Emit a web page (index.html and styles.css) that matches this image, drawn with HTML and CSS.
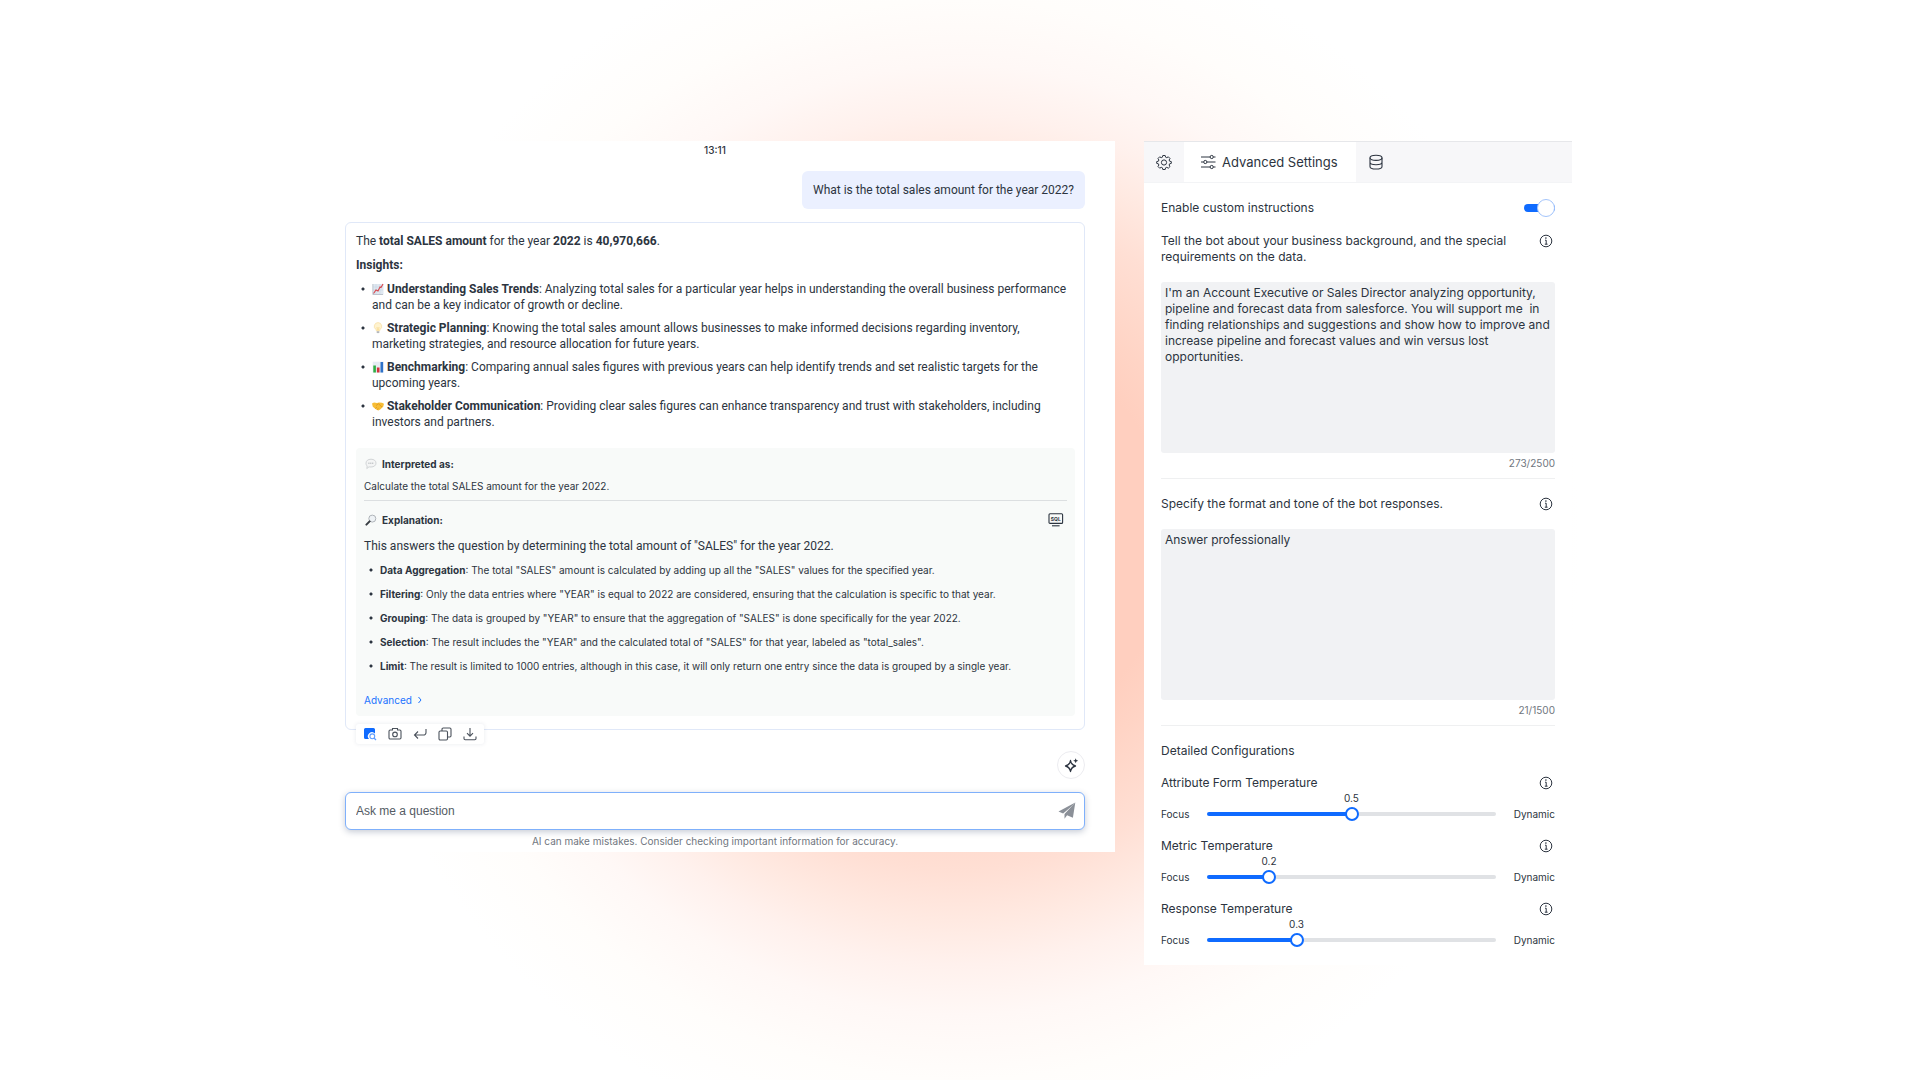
FILE: index.html
```html
<!DOCTYPE html>
<html lang="en">
<head>
    <meta charset="UTF-8" />
    <meta name="viewport" content="width=device-width, initial-scale=1.0"/>
    <title>Sales Bot</title>
    <link rel="stylesheet" href="styles.css">
</head>
<body>
    <!-- Shared icons -->
    <svg class="sprite" aria-hidden="true">
        <symbol id="icon-info" viewBox="0 0 14 14">
            <circle cx="7" cy="7" r="5.8" fill="none" stroke="currentColor"/>
            <path d="M6 6.2h1.2v4M5.8 10.2h2.8" fill="none" stroke="currentColor"/>
            <circle cx="6.9" cy="4.1" r=".8" fill="currentColor"/>
        </symbol>
    </svg>

    <div class="page">
        <!-- Chat -->
        <main class="chat">
            <div class="time">13:11</div>
            <div class="question">What is the total sales amount for the year 2022?</div>

            <section class="answer">
                <p class="line">The <b>total SALES amount</b> for the year <b>2022</b> is <b>40,970,666</b>.</p>
                <p class="line"><b>Insights:</b></p>
                <ul class="insights">
                    <li>
                        <svg class="emoji" viewBox="0 0 12 12"><rect x="1" y="1" width="10.5" height="10.5" fill="#dfe7f0"/><path d="M1 4h10M1 7h10M4 1v10M8 1v10" stroke="#c3d2e2" stroke-width=".5"/><path d="M1.5 10.5 4 7l2 1 2-4 1 .5L11 1" fill="none" stroke="#d9474d" stroke-width="1.1"/><path d="M.8 1v10.5H11" fill="none" stroke="#9aa5b1" stroke-width=".6"/></svg>
                        <b>Understanding Sales Trends</b>: Analyzing total sales for a particular year helps in understanding the overall business performance and can be a key indicator of growth or decline.
                    </li>
                    <li>
                        <svg class="emoji" viewBox="0 0 12 12"><path d="M6 .6a3.7 3.7 0 0 0-2.2 6.7l.7 1.7h3l.7-1.7A3.7 3.7 0 0 0 6 .6z" fill="#fff3cf" stroke="#f6dda0" stroke-width=".7"/><path d="M5 5l.5 3.5M7 5l-.5 3.5" stroke="#f2c866" stroke-width=".5"/><path d="M4.7 9.2h2.6v1.9H4.7z" fill="#b4b7bb"/></svg>
                        <b>Strategic Planning</b>: Knowing the total sales amount allows businesses to make informed decisions regarding inventory, marketing strategies, and resource allocation for future years.
                    </li>
                    <li>
                        <svg class="emoji" viewBox="0 0 12 12"><rect x=".7" y=".7" width="11" height="11" fill="#e6ecf3"/><path d="M1.3 4.5h2.6v7H1.3z" fill="#2fae44"/><path d="M4.9 6.5h2.6v5H4.9z" fill="#d5323b"/><path d="M8.5 1h2.6v10.5H8.5z" fill="#2f72c9"/></svg>
                        <b>Benchmarking</b>: Comparing annual sales figures with previous years can help identify trends and set realistic targets for the upcoming years.
                    </li>
                    <li>
                        <svg class="emoji" viewBox="0 0 12 12"><path d="M0 3.5 2 2.6l3 .5 2-.5 3 .2 2 1-.8 3-3 2.8-2 .9-2.4-1.3L.8 6.8z" fill="#f7bd35"/><path d="M4 5.5l2.5-1.7L10 7M5 9.6l1.5-1.2M3.3 8.5 5 7" fill="none" stroke="#d8901c" stroke-width=".7"/></svg>
                        <b>Stakeholder Communication</b>: Providing clear sales figures can enhance transparency and trust with stakeholders, including investors and partners.
                    </li>
                </ul>

                <div class="details">
                    <h2 class="details-title">
                        <svg class="details-icon" viewBox="0 0 12 12"><path d="M6 1.2c3 0 5 1.6 5 3.9S9 9 6 9c-.8 0-1.5 0-2-.2L1.8 10.6l.4-2.6C1.3 7.3 1 6.3 1 5.1c0-2.3 2-3.9 5-3.9z" fill="#f4f5f5" stroke="#c6cacd" stroke-width=".8"/><path d="M3.3 5.2h5.4" stroke="#a9aeb2" stroke-dasharray="1.2 .7"/></svg>
                        Interpreted as:
                    </h2>
                    <p class="interpreted">Calculate the total SALES amount for the year 2022.</p>
                    <div class="explanation-head">
                        <h2 class="details-title">
                            <svg class="details-icon" viewBox="0 0 12 12"><circle cx="7.3" cy="4.6" r="3.5" fill="#eef2f5" stroke="#a8adb2" stroke-width=".9"/><path d="M4.6 7.4 1.4 10.6" stroke="#383d43" stroke-width="2" stroke-linecap="round"/></svg>
                            Explanation:
                        </h2>
                        <button class="icon-button" type="button" aria-label="Show SQL">
                            <svg class="sql-icon" viewBox="0 0 16 14"><rect x="1" y=".8" width="13.6" height="9.6" rx="1" fill="none" stroke="currentColor" stroke-width="1.1"/><path d="M4 12.8h7.6" stroke="currentColor" stroke-width="1.1"/><text x="7.8" y="7.6" font-size="5" font-weight="700" text-anchor="middle" fill="currentColor">SQL</text></svg>
                        </button>
                    </div>
                    <p class="explanation">This answers the question by determining the total amount of "SALES" for the year 2022.</p>
                    <ul class="steps">
                        <li><b>Data Aggregation</b>: The total "SALES" amount is calculated by adding up all the "SALES" values for the specified year.</li>
                        <li><b>Filtering</b>: Only the data entries where "YEAR" is equal to 2022 are considered, ensuring that the calculation is specific to that year.</li>
                        <li><b>Grouping</b>: The data is grouped by "YEAR" to ensure that the aggregation of "SALES" is done specifically for the year 2022.</li>
                        <li><b>Selection</b>: The result includes the "YEAR" and the calculated total of "SALES" for that year, labeled as "total_sales".</li>
                        <li><b>Limit</b>: The result is limited to 1000 entries, although in this case, it will only return one entry since the data is grouped by a single year.</li>
                    </ul>
                    <a class="advanced" href="#">Advanced
                        <svg class="chevron" viewBox="0 0 6 8"><path d="M1.5 1l2.5 3-2.5 3" fill="none" stroke="currentColor"/></svg>
                    </a>
                </div>

                <div class="toolbar">
                    <button class="icon-button" type="button" aria-label="Inspect">
                        <svg class="tool" viewBox="0 0 14 14"><path d="M2.5 1h8A1.5 1.5 0 0 1 12 2.5v4A3.7 3.7 0 0 0 6 12H2.5A1.5 1.5 0 0 1 1 10.5v-8A1.5 1.5 0 0 1 2.5 1z" fill="#0f6bff"/><circle cx="9.3" cy="9.3" r="2.4" fill="#fff" stroke="#5f9dff" stroke-width="1.1"/><path d="m11 11 2 2" stroke="#5f9dff" stroke-width="1.2"/></svg>
                    </button>
                    <button class="icon-button" type="button" aria-label="Snapshot">
                        <svg class="tool" viewBox="0 0 14 14"><path d="M4.5 3V1.5h5V3h2.3A1.2 1.2 0 0 1 13 4.2v6.6a1.2 1.2 0 0 1-1.2 1.2H2.2A1.2 1.2 0 0 1 1 10.8V4.2A1.2 1.2 0 0 1 2.2 3z" fill="none" stroke="currentColor" stroke-width="1.1"/><circle cx="7" cy="7.4" r="2.3" fill="none" stroke="currentColor" stroke-width="1.1"/></svg>
                    </button>
                    <button class="icon-button" type="button" aria-label="Reply">
                        <svg class="tool" viewBox="0 0 14 14"><path d="M13 2v3.5A2.5 2.5 0 0 1 10.5 8h-9M5 4.5 1.5 8 5 11.5" fill="none" stroke="currentColor" stroke-width="1.1"/></svg>
                    </button>
                    <button class="icon-button" type="button" aria-label="Copy">
                        <svg class="tool" viewBox="0 0 14 14"><rect x="1" y="4" width="8.5" height="9" rx="1.2" fill="none" stroke="currentColor" stroke-width="1.1"/><path d="M4 4V2.2A1.2 1.2 0 0 1 5.2 1h6.6A1.2 1.2 0 0 1 13 2.2v6.6a1.2 1.2 0 0 1-1.2 1.2H9.5" fill="none" stroke="currentColor" stroke-width="1.1"/></svg>
                    </button>
                    <button class="icon-button" type="button" aria-label="Download">
                        <svg class="tool" viewBox="0 0 14 14"><path d="M7 1v8M4 6.2l3 3 3-3M1 9.5v2a1.2 1.2 0 0 0 1.2 1.2h9.6a1.2 1.2 0 0 0 1.2-1.2v-2" fill="none" stroke="currentColor" stroke-width="1.1"/></svg>
                    </button>
                </div>
            </section>

            <button class="suggest" type="button" aria-label="Suggestions">
                <svg class="sparkle" viewBox="0 0 16 16"><path d="M7.5 3.5Q8.3 8 12.500 9 8.3 10 7.5 14.5 6.7 10 2.5 9 6.7 8 7.5 3.5z" fill="none" stroke="currentColor" stroke-width="1.3" stroke-linejoin="round"/><path d="M12.7 1.2l.7 1.8 1.8.7-1.8.7-.7 1.8-.7-1.8-1.8-.7 1.8-.7z" fill="currentColor"/></svg>
            </button>

            <form class="ask">
                <input class="ask-input" type="text" placeholder="Ask me a question" aria-label="Ask me a question" />
                <button class="icon-button" type="button" aria-label="Send">
                    <svg class="send" viewBox="0 0 18 18"><path d="M17.3.5.5 9.4l4.6 2L14 4z" fill="#8b9098"/><path d="M17.3.5 6.5 12v4.8l2.6-3.5 5.8 2.4z" fill="#8b9098"/></svg>
                </button>
            </form>
            <p class="notice">AI can make mistakes. Consider checking important information for accuracy.</p>
        </main>

        <!-- Settings -->
        <aside class="settings">
            <nav class="tabs">
                <button class="tab" type="button" aria-label="General">
                    <svg class="tab-icon" viewBox="0 0 16 16"><path d="M6.8 1.5h2.4l.4 1.7 1.2.5 1.5-.9L14 4.500l-.9 1.5.5 1.2 1.700.4v1.8l-1.700.4-.5 1.2.9 1.5-1.700 1.700-1.5-.9-1.2.5-.4 1.700H6.8l-.4-1.700-1.2-.5-1.5.9L2 12.500l.9-1.500-.5-1.200-1.700-.4V7.600l1.700-.4.5-1.200L2 4.500l1.700-1.700 1.500.9 1.200-.5z" fill="none" stroke="currentColor" stroke-linejoin="round"/><circle cx="8" cy="8.5" r="2.6" fill="none" stroke="currentColor"/></svg>
                </button>
                <button class="tab active" type="button">
                    <svg class="tab-icon" viewBox="0 0 16 16"><path d="M1 3h9M13.4 3h2.1M1 8h2.6M7 8h8.5M1 13h9M13.4 13h2.1" stroke="currentColor"/><g fill="none" stroke="currentColor"><circle cx="11.7" cy="3" r="1.6"/><circle cx="5.3" cy="8" r="1.6"/><circle cx="11.7" cy="13" r="1.6"/></g></svg>
                    Advanced Settings
                </button>
                <button class="tab" type="button" aria-label="Data">
                    <svg class="tab-icon" viewBox="0 0 16 16"><g fill="none" stroke="currentColor" stroke-width="1.1"><ellipse cx="8" cy="3.8" rx="6" ry="2.6"/><path d="M2 3.8v8.6C2 13.8 4.7 15 8 15s6-1.2 6-2.6V3.8M2 8.2c0 1.4 2.7 2.5 6 2.5s6-1.1 6-2.5"/></g></svg>
                </button>
            </nav>

            <form class="settings-body">
                <div class="row">
                    <label for="custom">Enable custom instructions</label>
                    <input class="switch" type="checkbox" id="custom" checked />
                </div>
                <div class="row hint">
                    <label for="background">Tell the bot about your business background, and the special requirements on the data.</label>
                    <svg class="info"><use href="#icon-info"/></svg>
                </div>
                <textarea class="text-area" id="background">I'm an Account Executive or Sales Director analyzing opportunity, pipeline and forecast data from salesforce. You will support me  in finding relationships and suggestions and show how to improve and increase pipeline and forecast values and win versus lost opportunities.</textarea>
                <div class="counter">273/2500</div>

                <div class="row hint divided">
                    <label for="tone">Specify the format and tone of the bot responses.</label>
                    <svg class="info"><use href="#icon-info"/></svg>
                </div>
                <textarea class="text-area" id="tone">Answer professionally</textarea>
                <div class="counter">21/1500</div>

                <h2 class="config-title divided">Detailed Configurations</h2>

                <div class="row">
                    <label for="attribute">Attribute Form Temperature</label>
                    <svg class="info"><use href="#icon-info"/></svg>
                </div>
                <div class="slider-row">
                    <span>Focus</span>
                    <div class="slider" style="--value: 0.5">
                        <output class="value" for="attribute">0.5</output>
                        <input class="range" type="range" id="attribute" min="0" max="1" step="0.1" value="0.5" />
                    </div>
                    <span>Dynamic</span>
                </div>

                <div class="row">
                    <label for="metric">Metric Temperature</label>
                    <svg class="info"><use href="#icon-info"/></svg>
                </div>
                <div class="slider-row">
                    <span>Focus</span>
                    <div class="slider" style="--value: 0.2">
                        <output class="value" for="metric">0.2</output>
                        <input class="range" type="range" id="metric" min="0" max="1" step="0.1" value="0.2" />
                    </div>
                    <span>Dynamic</span>
                </div>

                <div class="row">
                    <label for="response">Response Temperature</label>
                    <svg class="info"><use href="#icon-info"/></svg>
                </div>
                <div class="slider-row">
                    <span>Focus</span>
                    <div class="slider" style="--value: 0.3">
                        <output class="value" for="response">0.3</output>
                        <input class="range" type="range" id="response" min="0" max="1" step="0.1" value="0.3" />
                    </div>
                    <span>Dynamic</span>
                </div>
            </form>
        </aside>
    </div>
</body>
</html>
```

FILE: styles.css
```css
* {
    box-sizing: border-box;
}

body {
    margin: 0;
    min-height: 100vh;
    font-family: Inter, sans-serif;
    font-size: 12px;
    line-height: 16px;
    color: #2c3440;
    background: radial-gradient(circle at 50% 540px, #ffcfbf 0, #ffcfbf 210px, #ffd4c5 250px, #ffdfd4 330px, #ffe9e1 380px, #fff1ed 425px, #fff8f6 475px, #fffdfb 540px, #fff 620px);
}

p, h2, ul {
    margin: 0;
}

button, input, textarea {
    font: inherit;
    color: inherit;
}

b {
    font-weight: 700;
}

.sprite {
    display: none;
}

.page {
    display: grid;
    grid-template-columns: minmax(0, 800fr) minmax(0, 428fr);
    align-items: start;
    gap: 29px;
    padding: 141px 348px 40px 315px;
}

/* Chat */
.chat {
    display: flex;
    flex-direction: column;
    padding: 0 30px 3px;
    background: #fff;
}

.time {
    font-size: 10px;
    font-weight: 500;
    line-height: 18px;
    text-align: center;
}

.question {
    align-self: flex-end;
    margin: 12px 0 13px;
    padding: 11px;
    border-radius: 6px;
    background: #ebf0ff;
}

.question, .line, .insights, .explanation {
    font-family: Roboto, sans-serif;
}

.answer {
    position: relative;
    padding: 10px 9px 13px 10px;
    border: 1px solid #e0e8f8;
    border-radius: 6px;
}

.line {
    margin-bottom: 8px;
}

.insights, .steps {
    display: grid;
    padding: 0;
    list-style: none;
}

.insights {
    gap: 7px;
    margin-bottom: 18px;
}

.insights li, .steps li {
    padding-left: 16px;
    background: radial-gradient(circle at 7px 8px, currentColor 1px, transparent 2px);
}

.emoji {
    width: 12px;
    height: 12px;
    vertical-align: -2px;
}

.details {
    padding: 8px;
    border-radius: 4px;
    background: #f8faf9;
    font-size: 10px;
}

.details-title {
    display: flex;
    align-items: center;
    gap: 5px;
    padding-left: 1px;
    font-size: 10px;
    font-weight: 700;
}

.details-icon {
    width: 12px;
    height: 12px;
}

.interpreted {
    padding: 6px 0;
    border-bottom: 1px solid #dcdfe1;
}

.explanation-head {
    display: flex;
    justify-content: space-between;
    align-items: center;
    padding: 11px 3px 10px 0;
}

.icon-button {
    display: flex;
    padding: 0;
    border: 0;
    background: none;
    cursor: pointer;
}

.sql-icon {
    width: 16px;
    height: 14px;
}

.explanation {
    margin-bottom: 8px;
    font-size: 12px;
}

.steps {
    gap: 8px;
    margin-bottom: 18px;
}

.advanced {
    color: #1a73ff;
    text-decoration: none;
}

.chevron {
    width: 6px;
    height: 8px;
    margin-left: 2px;
}

/* Sits over the bottom edge of the answer */
.toolbar {
    position: absolute;
    left: 10px;
    bottom: -15px;
    display: flex;
    gap: 11px;
    padding: 3px 7px;
    border-radius: 3px;
    background: #fff;
    box-shadow: 0 0 4px rgba(30, 50, 90, 0.1);
    color: #4b525c;
}

.tool {
    width: 14px;
    height: 14px;
}

.suggest {
    display: flex;
    align-items: center;
    justify-content: center;
    align-self: flex-end;
    width: 28px;
    height: 28px;
    margin: 21px 0 13px;
    padding: 0;
    border: 1px solid #ececf0;
    border-radius: 50%;
    background: #fff;
}

.sparkle {
    width: 16px;
    height: 16px;
}

.ask {
    display: flex;
    align-items: center;
    height: 38px;
    padding: 0 8px 0 10px;
    border: 1px solid #7fb0fb;
    border-radius: 6px;
    background: #fff;
    box-shadow: 0 2px 6px rgba(30, 50, 90, 0.25);
}

.ask-input {
    flex: 1;
    padding: 0;
    border: 0;
    outline: none;
    background: none;
    font-family: "Liberation Sans", sans-serif;
}

.ask-input::placeholder {
    color: #545b64;
}

.send {
    width: 18px;
    height: 18px;
}

.notice {
    margin-top: 3px;
    font-size: 10px;
    color: #70767e;
    text-align: center;
}

/* Settings */
.settings {
    background: #fff;
}

.tabs {
    display: flex;
    height: 42px;
    border-top: 1px solid #e6e7ea;
    border-bottom: 1px solid #f3f4f6;
    background: #f7f7f9;
}

.tab {
    display: flex;
    align-items: center;
    gap: 6px;
    padding: 0 12px;
    border: 0;
    background: none;
    font-size: 13px;
}

.tab.active {
    padding: 0 18px 0 16px;
    background: #fff;
}

.tab-icon {
    width: 16px;
    height: 16px;
}

.settings-body {
    padding: 17px;
}

.row {
    display: flex;
    justify-content: space-between;
    align-items: center;
}

.hint {
    align-items: flex-start;
    padding: 17px 0;
}

.hint label {
    max-width: 350px;
}

.info {
    flex: none;
    width: 14px;
    height: 14px;
    margin: 1px 2px;
}

/* On/off switch */
.switch {
    appearance: none;
    display: flex;
    align-items: center;
    justify-content: flex-end;
    width: 31px;
    height: 8px;
    margin: 0;
    border-radius: 4px;
    background: #0f6bff;
}

.switch::before {
    content: "";
    width: 16px;
    height: 16px;
    border: 1px solid #a3c4fb;
    border-radius: 50%;
    background: #fff;
}

.text-area {
    display: block;
    width: 100%;
    height: 171px;
    padding: 3px 4px;
    border: 0;
    border-radius: 3px;
    background: #f1f2f4;
    resize: none;
    outline: none;
}

.counter {
    padding: 2px 0 7px;
    font-size: 10px;
    color: #70767e;
    text-align: right;
}

.divided {
    border-top: 1px solid #eff0f1;
}

.config-title {
    padding: 17px 0 16px;
    font-size: 12px;
    font-weight: 400;
}

.slider-row {
    display: grid;
    grid-template-columns: 46px 1fr 59px;
    align-items: end;
    margin-bottom: 16px;
    font-size: 10px;
}

.slider-row:last-child {
    margin-bottom: 0;
}

.slider-row span:last-child {
    text-align: right;
}

.value {
    display: block;
    width: 28px;
    margin-left: calc((100% - 14px) * var(--value) - 7px);
    line-height: 15px;
    text-align: center;
}

.range {
    appearance: none;
    display: block;
    width: 100%;
    height: 16px;
    margin: 0;
    background: none;
}

.range::-webkit-slider-runnable-track {
    height: 4px;
    border-radius: 2px;
    background: linear-gradient(#0f6bff, #0f6bff) 0 0 / calc(var(--value) * 100%) 100% no-repeat #e0e2e5;
}

.range::-webkit-slider-thumb {
    appearance: none;
    width: 14px;
    height: 14px;
    margin-top: -5px;
    border: 2px solid #0f6bff;
    border-radius: 50%;
    background: #fff;
}
```
